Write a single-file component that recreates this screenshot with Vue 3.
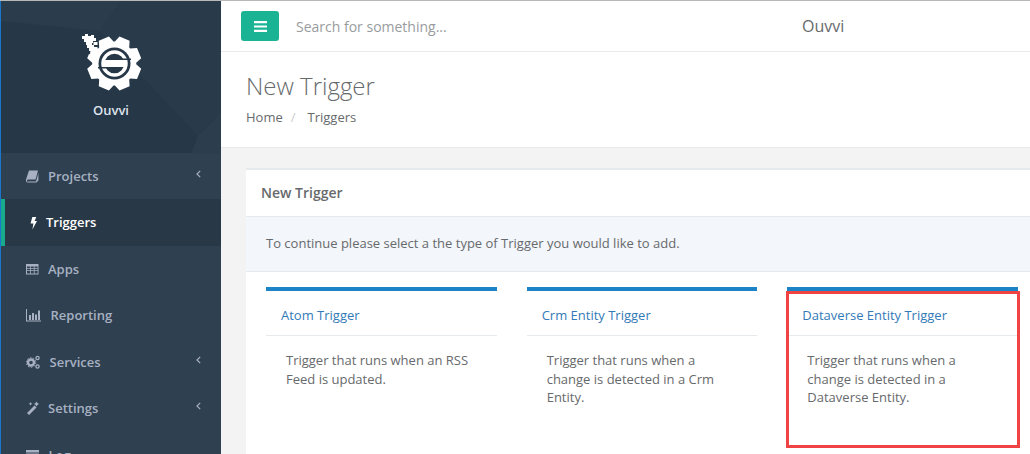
<template>
  <div class="page">
    <aside class="sidebar">
      <div class="profile">
        <svg class="profile-bg" width="220" height="153" viewBox="0 0 220 153">
          <polygon points="0,0 120,0 99,30 0,20" fill="#2b3d4d" />
          <polygon points="120,0 220,0 220,112 197,135 99,30" fill="#293b4b" />
          <polygon points="197,135 220,112 220,153 190,153" fill="#2c3e4e" />
        </svg>
        <svg class="logo" width="62" height="60" viewBox="80 34 62 60">
          <path :d="gearPath" fill="#fff" />
          <path d="M78 30h20v6l-6 4-2 14-12 2z" fill="#263747" />
          <circle cx="114.500" cy="63.500" r="16" fill="#263747" />
          <circle cx="114.500" cy="63.500" r="11.500" fill="none" stroke="#fff" stroke-width="3.500" />
          <path d="M104 60h21v7h-21z" fill="#fff" />
          <path d="M114 58.600h17v1.400h-17zM98 67h17v1.400H98z" fill="#263747" />
          <path d="M82 36h3v-2h3v2h3v-1h3v3h2v3h-3v2h-1v2h2v3h1v4h-3v-1h-3v-3h-2v-3h-1v-3h-2v-3h-2z" fill="#fff" />
          <path d="M93.500 42h4v3h-4zM93.500 47h4v3h-4z" fill="#fff" />
        </svg>
        <div class="profile-name">Ouvvi</div>
      </div>
      <nav>
        <a v-for="item in navItems" :key="item.label" class="nav-item" :class="{ active: item.active }">
          <svg class="nav-icon" :width="item.w" height="14" :viewBox="`0 0 ${item.w} 14`">
            <g v-html="item.icon"></g>
          </svg>
          <span>{{ item.label }}</span>
          <svg v-if="item.arrow" class="chevron" width="5" height="8" viewBox="0 0 5 8">
            <path d="M4.200 .8 1 4l3.200 3.200" fill="none" stroke="currentColor" stroke-width="1.200" />
          </svg>
        </a>
      </nav>
    </aside>

    <main class="main">
      <header class="topbar">
        <button class="menu-btn">
          <svg width="13" height="11" viewBox="0 0 13 11">
            <path d="M0 0h13v2.200H0zM0 4.400h13v2.200H0zM0 8.800h13V11H0z" fill="#fff" />
          </svg>
        </button>
        <input class="search" placeholder="Search for something..." />
        <span class="org">Ouvvi</span>
      </header>

      <section class="page-heading">
        <h2>New Trigger</h2>
        <div class="crumbs">
          <span>Home</span>
          <i>/</i>
          <span>Triggers</span>
        </div>
      </section>

      <section class="content">
        <div class="card">
          <div class="card-title">New Trigger</div>
          <div class="card-info">To continue please select a the type of Trigger you would like to add.</div>
          <div class="card-body">
            <div v-for="p in triggerTypes" :key="p.title" class="panel">
              <div class="panel-heading">{{ p.title }}</div>
              <p>{{ p.text }}</p>
            </div>
          </div>
        </div>
      </section>
    </main>

    <div class="highlight"></div>
  </div>
</template>

<script setup>
const gearPath = (() => {
  const cx = 114.2
  const cy = 63.5
  const pts = []
  for (let i = 0; i < 8; i++) {
    const a = (i * 45 + 22.5 - 90) * Math.PI / 180
    const spread = [[-0.36, 22], [-0.2, 27.5], [0.2, 27.5], [0.36, 22]]
    for (const [d, r] of spread) {
      pts.push(`${(cx + Math.cos(a + d) * r).toFixed(1)} ${(cy + Math.sin(a + d) * r).toFixed(1)}`)
    }
  }
  return 'M' + pts.join('L') + 'Z'
})()

const navItems = [
  {
    label: 'Projects',
    w: 12.5,
    arrow: true,
    icon: '<path d="M3 1.500h9L9.600 10.500H2.200Q.9 10.500 1.100 12T2.400 12.600H10L12.400 4v7.500l-2 2H2Q-.4 13.500 0 10.500z" fill="currentColor"/>'
  },
  {
    label: 'Triggers',
    w: 6.5,
    active: true,
    icon: '<path d="M2.300 1h4L4.600 5h2.400L2.400 13.500 3.400 7.500H.6z" fill="currentColor"/>'
  },
  {
    label: 'Apps',
    w: 12.5,
    icon: '<path d="M0 2h12.500v10.500H0zM1 4.500v1.500h3v-1.500zM4.800 4.500v1.500h3v-1.500zM8.600 4.500v1.500h3v-1.500zM1 6.800v1.500h3v-1.500zM4.800 6.800v1.500h3v-1.500zM8.600 6.800v1.500h3v-1.500zM1 9.100v2.300h3v-2.300zM4.800 9.100v2.300h3v-2.300zM8.600 9.100v2.300h3v-2.300z" fill="currentColor" fill-rule="evenodd"/>'
  },
  {
    label: 'Reporting',
    w: 15,
    icon: '<path d="M0 1h1v11.500h15v1H0zM3 7h2v5H3zM6 5h2v7H6zM9 6.500h2v5.500H9zM12 2.500h2V12h-2z" fill="currentColor"/>'
  },
  {
    label: 'Services',
    w: 14,
    arrow: true,
    icon: '<circle cx="5" cy="7.500" r="3" fill="none" stroke="currentColor" stroke-width="2.400"/><circle cx="5" cy="7.500" r="4.800" fill="none" stroke="currentColor" stroke-width="1" stroke-dasharray="1.500 1.500"/><circle cx="11.500" cy="3" r="1.600" fill="none" stroke="currentColor" stroke-width="1.300"/><circle cx="11.500" cy="11.500" r="1.600" fill="none" stroke="currentColor" stroke-width="1.300"/>'
  },
  {
    label: 'Settings',
    w: 12.5,
    arrow: true,
    icon: '<path d="M8.500 4.500 10.500 6.500 3 14 1 12zM4.500 1l.6 1.200L6.300 2.800 5.100 3.400 4.500 4.600 3.900 3.400 2.700 2.800 3.900 2.200zM10.500 .5l.9 1.600L13 3l-1.600.9-.9 1.600-.9-1.600L8 3l1.600-.9z" fill="currentColor"/>'
  },
  {
    label: 'Log',
    w: 13,
    icon: '<path d="M0 2h13v2.500H0zM0 5.500h13V8H0zM0 9h13v2.500H0z" fill="currentColor"/>'
  }
]

const triggerTypes = [
  { title: 'Atom Trigger', text: 'Trigger that runs when an RSS Feed is updated.' },
  { title: 'Crm Entity Trigger', text: 'Trigger that runs when a change is detected in a Crm Entity.' },
  { title: 'Dataverse Entity Trigger', text: 'Trigger that runs when a change is detected in a Dataverse Entity.' }
]
</script>

<style scoped>
.page {
  position: relative;
  display: flex;
  height: 454px;
  box-sizing: border-box;
  border-top: 1px solid #b8b8b8;
  overflow: hidden;
  font-family: "Open Sans", "Liberation Sans", sans-serif;
  font-size: 13px;
  color: #676a6c;
}

.sidebar {
  flex: 0 0 220px;
  border-left: 1px solid #1a76c9;
  background: #2f4050;
  overflow: hidden;
}

.profile {
  position: relative;
  height: 152px;
  display: flex;
  flex-direction: column;
  align-items: center;
  background: #263747;
}

.profile-bg {
  position: absolute;
  top: 0;
  left: 0;
}

.logo {
  position: relative;
  margin-top: 33px;
}

.profile-name {
  position: relative;
  margin-top: 7px;
  font-weight: 600;
  color: #dfe4ed;
  line-height: 18px;
}

.nav-item {
  display: flex;
  align-items: center;
  height: 46.4px;
  padding-left: 25px;
  box-sizing: border-box;
  font-weight: 600;
  color: #a7b1c2;
}

.nav-item.active {
  border-left: 4px solid #19aa8d;
  background: #293846;
  color: #fff;
}

.active span {
  margin-bottom: 2px;
}

.nav-icon {
  margin-right: 9.5px;
  color: #a7b1c2;
}

.active .nav-icon {
  color: #fff;
}

.chevron {
  margin-left: auto;
  margin-right: 20px;
  margin-top: -4px;
}

.main {
  flex: 1;
  min-width: 0;
  display: flex;
  flex-direction: column;
  background: #f3f3f4;
}

.topbar {
  display: flex;
  flex: none;
  align-items: center;
  height: 50px;
  padding-left: 20px;
  background: #fff;
  border-bottom: 1px solid #e7eaec;
}

.menu-btn {
  width: 38px;
  height: 30px;
  padding: 0;
  border: 0;
  border-radius: 3px;
  background: #1ab394;
  display: flex;
  align-items: center;
  justify-content: center;
}

.search {
  width: 506px;
  margin-left: 17px;
  padding: 0;
  border: 0;
  outline: none;
  font: 14px "Open Sans", sans-serif;
  color: #676a6c;
}

.search::placeholder {
  color: #999c9e;
  opacity: 1;
}

.org {
  font-size: 16px;
  color: #676a6c;
}

.page-heading {
  flex: none;
  height: 96px;
  padding: 19px 0 0 25px;
  box-sizing: border-box;
  background: #fff;
  border-bottom: 1px solid #e7eaec;
}

.page-heading h2 {
  margin: 0;
  font-size: 24px;
  font-weight: 300;
  line-height: 30px;
}

.crumbs {
  display: flex;
  margin-top: 7px;
  line-height: 18px;
}

.crumbs i {
  margin: 0 12px 0 8px;
  font-style: normal;
  color: #ccc;
}

.content {
  flex: 1;
  display: flex;
  flex-direction: column;
  padding: 20px 0 0 25px;
}

.card {
  flex: 1;
  border-top: 2px solid #e7eaec;
  background: #fff;
}

.card-title {
  height: 47px;
  padding: 0 0 2px 15px;
  box-sizing: border-box;
  display: flex;
  align-items: center;
  font-size: 14px;
  font-weight: 600;
  border-bottom: 1px solid #e7eaec;
}

.card-info {
  height: 55px;
  padding: 0 0 3px 20px;
  box-sizing: border-box;
  display: flex;
  align-items: center;
  background: #f3f6fb;
  border-bottom: 1px solid #e7eaec;
}

.card-body {
  display: grid;
  grid-template-columns: repeat(3, 1fr);
  column-gap: 30px;
  width: 752px;
  padding: 15px 0 0 20px;
}

.panel {
  border-top: 4px solid #1c84c6;
}

.panel-heading {
  height: 45px;
  padding: 3px 0 0 15px;
  box-sizing: border-box;
  display: flex;
  align-items: center;
  color: #337ab7;
  border-bottom: 1px solid #e7eaec;
}

.panel p {
  margin: 15px 20px 0 20px;
  line-height: 18.5px;
}

.highlight {
  position: absolute;
  left: 786px;
  top: 290px;
  width: 234px;
  height: 157px;
  box-sizing: border-box;
  border: 3px solid #f04343;
}
</style>
